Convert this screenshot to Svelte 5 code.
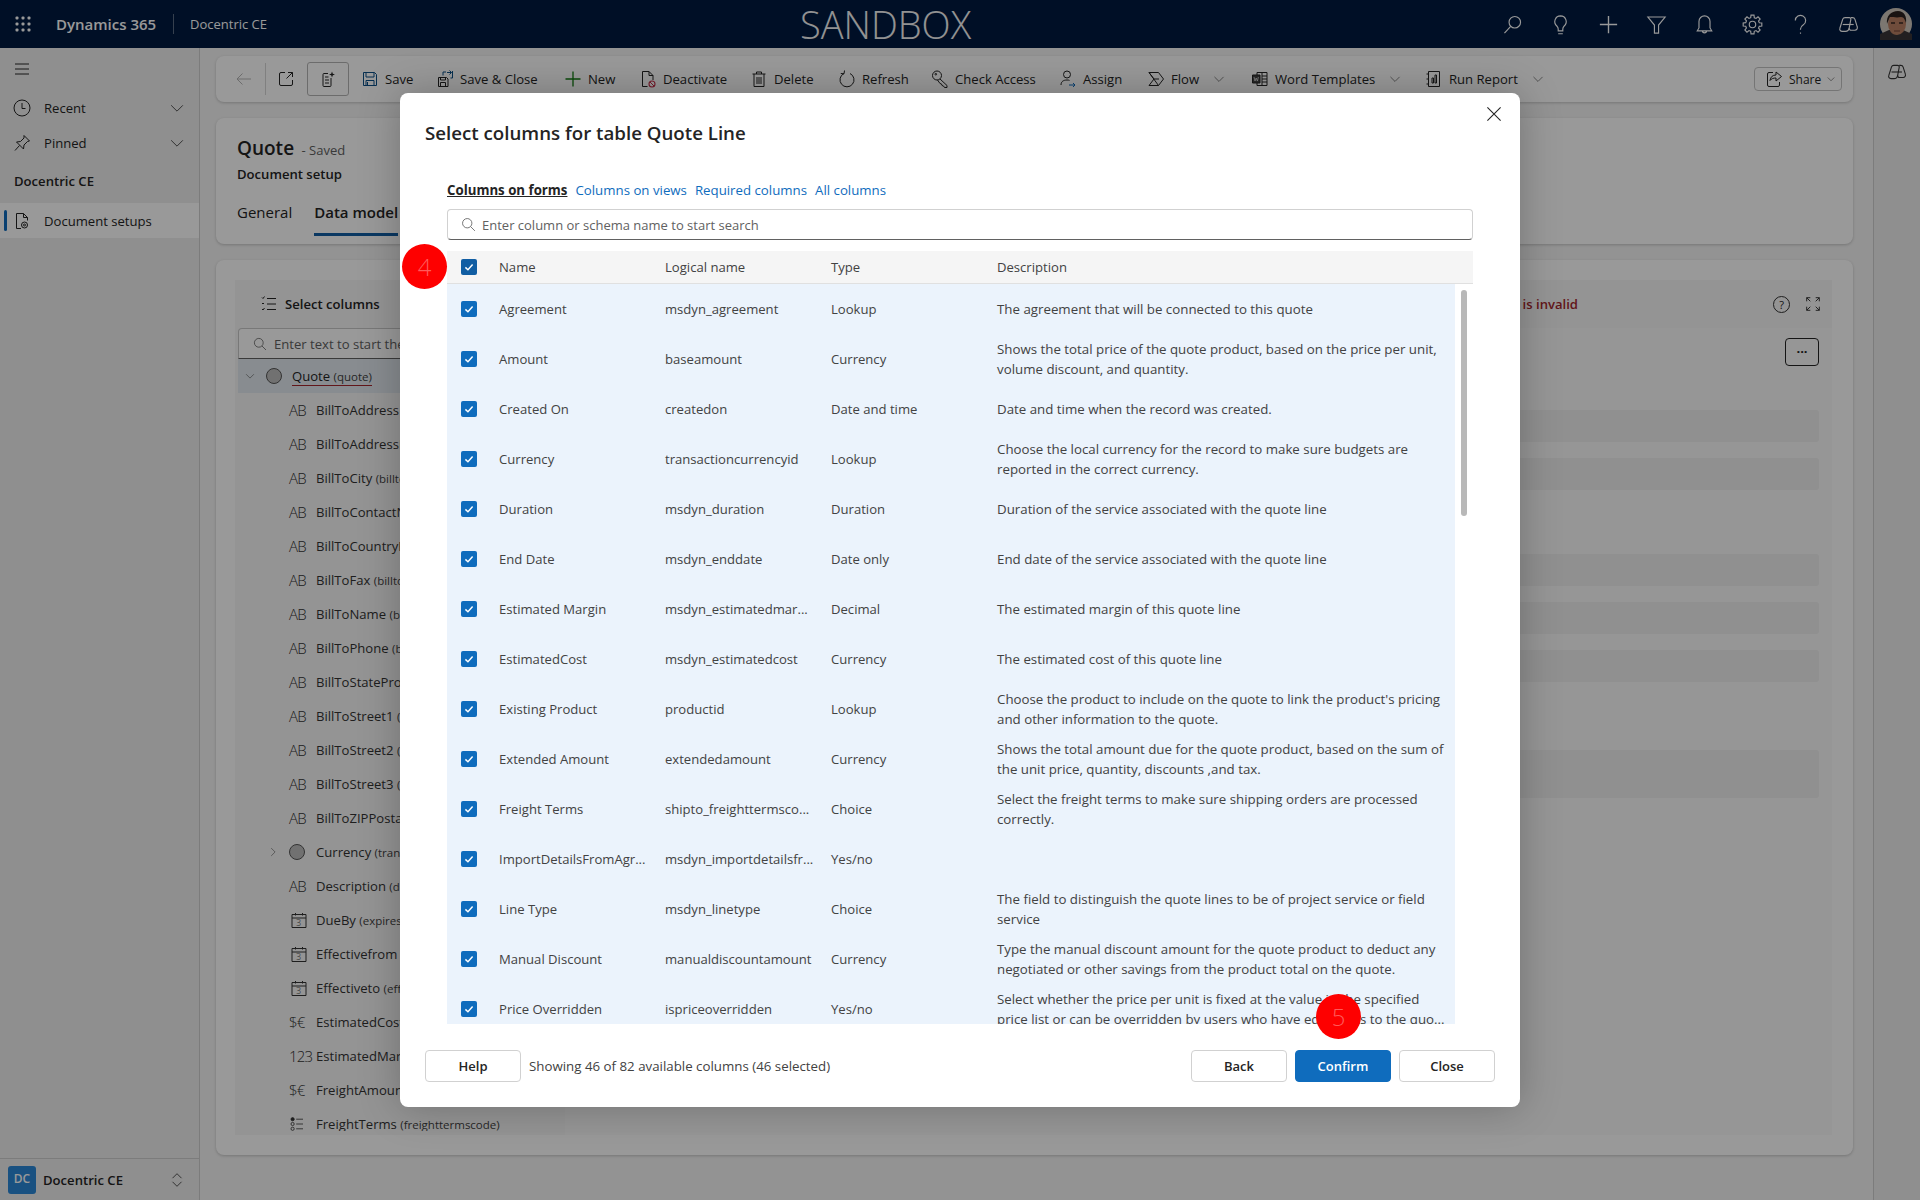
<script lang="ts">
  // gear outline for the settings icon
  function gearPath() {
    let d = '';
    for (let i = 0; i < 8; i++) {
      const a = (i * Math.PI) / 4;
      const pts = [[-0.16, 8.2], [0.16, 8.2], [0.26, 6.1], [0.53, 6.1]].map(([o, r]) => {
        return `${(10 + r * Math.cos(a + o)).toFixed(2)} ${(10 + r * Math.sin(a + o)).toFixed(2)}`;
      });
      d += `${i ? 'L' : 'M'}${pts.join('L')}`;
    }
    return d + 'Z';
  }

  const icons: Record<string, string> = {
    back: '<path d="M17 10H3M8.5 4.5 3 10l5.5 5.5"/>',
    popout: '<path d="M9 3.5H5a1.5 1.5 0 0 0-1.5 1.5v10A1.5 1.5 0 0 0 5 16.500h10a1.500 1.500 0 0 0 1.500-1.500v-4M12 3.500h4.500V8M16.500 3.500 10.500 9.500"/>',
    form: '<path d="M13 9v7.500a1 1 0 0 1-1 1H6a1 1 0 0 1-1-1v-11a1 1 0 0 1 1-1h4"/><path d="M7 8h3.500M7 11h4M7 14h4" /><path d="M14 2.500l.8 2.200 2.200.8-2.200.8-.8 2.200-.8-2.200-2.200-.8 2.200-.8z" fill="currentColor" stroke="none"/>',
    save: '<g stroke="#0b4f86"><path d="M3.500 3.500h11l2 2v11h-13z"/><path d="M6 3.500V8h8V3.500M6 16.500V11.500h8v5"/><path d="M7.500 13v3.500" /></g>',
    saveclose: '<path d="M3.500 8.500h8l1.500 1.500v7.500H3.500z"/><path d="M5.500 8.500V11h5V8.500M5.500 17.500v-4h5v4"/><g stroke="#0b4f86"><path d="M8 6.500V3h3M12 3.500h4.500M14.500 1.500l2 2-2 2"/><path d="M17.500 2v7h-2"/></g>',
    new: '<path d="M10 2.500v15M2.500 10h15" stroke="#107c10" stroke-width="1.300"/>',
    deactivate: '<path d="M9.500 17.500H4.500v-15h6.500l4 4v4.500M11 2.500v4h4"/><circle cx="14" cy="15" r="3" stroke="#c4314b" stroke-width="1.100"/><path d="m12 13 4 4" stroke="#c4314b"/>',
    delete: '<path d="M3.500 5h13M7.500 5V3h5v2M5 5v12.500h10V5M8 8v7M10 8v7M12 8v7"/>',
    refresh: '<path d="M7 4.500a7 7 0 1 0 6 0M7.500 1.500 7 4.800 3.800 4.500" />',
    key: '<circle cx="7" cy="6.500" r="4.500"/><path d="m10 10 7 6.500v2h-2.500l-1-1.500-1.500-.5-.5-1.500-1.500-.5L7.500 11"/><circle cx="5.800" cy="5.200" r=".8"/>',
    assign: '<circle cx="9" cy="5.500" r="3.500"/><path d="M3 16c0-3.500 2.500-5 6-5 1 0 1.800.1 2.500.4"/><path d="M11 16h6M15 14l2 2-2 2" stroke="#0f6cbd"/>',
    flow: '<path d="M3 3.500h9.500l5 6.500-5 6.500H3l5-6.500zM8 10h5M3 3.500l9.500 13"/>',
    word: '<path d="M7 3.500h10v13H7z"/><path d="M12 3.500v13M12 7h5M12 10h5M12 13h5"/><path d="M2.500 6h7.500v8H2.500z" fill="#444"/><path d="m4 8 1 4 1.200-3 1.200 3 1-4" stroke="#eee" stroke-width=".7"/>',
    report: '<path d="M4.500 2.500h11v15h-11zM2.500 5h2M2.500 10h2M2.500 15h2"/><path d="M8 14V9h1.500v5zM11 14V6h1.500v8z"/>',
    chevron: '<path d="M3.500 7 10 13.500 16.500 7"/>',
    share: '<path d="M9 3.500H5A1.500 1.500 0 0 0 3.500 5v11A1.500 1.500 0 0 0 5 17.500h9a1.500 1.500 0 0 0 1.500-1.500v-3"/><path d="M12 3v3c-3.500 0-5.500 2-6 5.500 1.500-2 3.500-2.500 6-2.500v3l5.500-4.500z"/>',
    search: '<circle cx="12" cy="8" r="5"/><path d="M8.400 11.600 3 17.500"/>',
    bulb: '<path d="M10 2.500a5 5 0 0 0-3.200 8.800c.7.700 1.200 1.500 1.200 2.700v1.500h4V14c0-1.200.5-2 1.200-2.700A5 5 0 0 0 10 2.500zM8 18h4"/>',
    plus: '<path d="M10 2.500v15M2.500 10h15" stroke-width="1.200"/>',
    filter: '<path d="M2.500 3.500h15L11.800 10.500v7H8.200v-7z"/>',
    bell: '<path d="M10 2.500a4.800 4.800 0 0 0-4.800 4.800V13l-1.500 2.500h12.600L14.800 13V7.300A4.800 4.800 0 0 0 10 2.500zM8.200 15.500a1.800 1.800 0 0 0 3.600 0"/>',
    gear: `<path d="${gearPath()}"/><circle cx="10" cy="10" r="2.800"/>`,
    help: '<path d="M5.500 6.500a4.500 4.500 0 1 1 7 3.800C11 11.300 10 12 10 14v.5M10 17v1"/>',
    copilot: '<path d="M7 4h3.500c1 0 1.700.8 1.500 1.800L10.600 13c-.3 1.700-1.500 3-3.200 3H4.500C3 16 2 14.700 2.500 13.300L5 5.300C5.300 4.500 6 4 7 4z"/><path d="M12 4h1.500c1 0 1.800.6 2.100 1.500l2 6.500c.5 1.500-.5 3-2 3h-3.400c-1 0-1.700-.9-1.500-1.900"/><path d="M5 10h9.500"/>',
    clock: '<circle cx="10" cy="10" r="8"/><path d="M10 5v5.500h3.500" />',
    pin: '<path d="M12 2.500 17.500 8l-2 .5-3.500 3.500-.5 4-7-7 4-.5L12 5zM7.500 12.500 3 17.500"/>',
    docgear: '<path d="M9 17.500H4.500v-15h7l4 4v3M11.500 2.500v4h4"/><circle cx="12.500" cy="14" r="3"/><circle cx="12.500" cy="14" r="1"/>',
    lines: '<path d="M8 4.500h9M8 10h9M8 15.500h9M3 3.500l1 1 1.500-2M3 15l1 1 1.500-2"/><path d="M3 9.500h2"/>',
    find: '<circle cx="8.500" cy="8.500" r="5.500"/><path d="m12.500 12.500 5 5"/>',
    close: '<path d="M4 4l12 12M16 4 4 16"/>',
    fullscreen: '<path d="M3 7V3h4M3 3l4 4M13 3h4v4M17 3l-4 4M3 13v4h4M3 17l4-4M17 13v4h-4M17 17l-4-4"/>',
    cal: '<path d="M3 4.500h14v13H3zM3 8h14M6.500 3v2.500M13.500 3v2.500"/>',
    list: '<circle cx="4.500" cy="4" r="2" fill="currentColor"/><circle cx="4.500" cy="10" r="2"/><circle cx="4.500" cy="16" r="2"/><path d="M9 4h8.500M9 10h8.500M9 16h8.500"/>',
    tick: '<path d="M5.500 10.500 8.700 13.500 14.500 7" stroke-width="1.800"/>',
    updown: '<path d="M5 8l5-5 5 5M5 12l5 5 5-5"/>'
  };

  const commands = [
    { icon: 'save', label: 'Save', width: 75 },
    { icon: 'saveclose', label: 'Save & Close', width: 128 },
    { icon: 'new', label: 'New', width: 75 },
    { icon: 'deactivate', label: 'Deactivate', width: 111 },
    { icon: 'delete', label: 'Delete', width: 88 },
    { icon: 'refresh', label: 'Refresh', width: 93 },
    { icon: 'key', label: 'Check Access', width: 128 },
    { icon: 'assign', label: 'Assign', width: 88 },
    { icon: 'flow', label: 'Flow', width: 104, menu: true },
    { icon: 'word', label: 'Word Templates', width: 174, menu: true },
    { icon: 'report', label: 'Run Report', width: 140, menu: true }
  ];

  const topIcons = ['search', 'bulb', 'plus', 'filter', 'bell', 'gear', 'help', 'copilot'];

  const treeRows = [
    { kind: 'AB', name: 'BillToAddress', logical: '(billtoaddress)' },
    { kind: 'AB', name: 'BillToAddressName', logical: '(billto_name)' },
    { kind: 'AB', name: 'BillToCity', logical: '(billto_city)' },
    { kind: 'AB', name: 'BillToContactName', logical: '(billto_contactname)' },
    { kind: 'AB', name: 'BillToCountryRegion', logical: '(billto_country)' },
    { kind: 'AB', name: 'BillToFax', logical: '(billto_fax)' },
    { kind: 'AB', name: 'BillToName', logical: '(billto_name)' },
    { kind: 'AB', name: 'BillToPhone', logical: '(billto_telephone)' },
    { kind: 'AB', name: 'BillToStateProvince', logical: '(billto_stateorprovince)' },
    { kind: 'AB', name: 'BillToStreet1', logical: '(billto_line1)' },
    { kind: 'AB', name: 'BillToStreet2', logical: '(billto_line2)' },
    { kind: 'AB', name: 'BillToStreet3', logical: '(billto_line3)' },
    { kind: 'AB', name: 'BillToZIPPostalCode', logical: '(billto_postalcode)' },
    { kind: 'circle', name: 'Currency', logical: '(transactioncurrencyid)' },
    { kind: 'AB', name: 'Description', logical: '(description)' },
    { kind: 'cal', name: 'DueBy', logical: '(expiresdate)' },
    { kind: 'cal', name: 'Effectivefrom', logical: '(effectivefrom)' },
    { kind: 'cal', name: 'Effectiveto', logical: '(effectiveto)' },
    { kind: '$€', name: 'EstimatedCost', logical: '(msdyn_estimatedcost)' },
    { kind: '123', name: 'EstimatedMargin', logical: '(msdyn_estimatedmargin)' },
    { kind: '$€', name: 'FreightAmount', logical: '(freightamount)' },
    { kind: 'list', name: 'FreightTerms', logical: '(freighttermscode)' }
  ];

  const columns = [
    { name: 'Agreement', logical: 'msdyn_agreement', type: 'Lookup', desc: ['The agreement that will be connected to this quote'] },
    { name: 'Amount', logical: 'baseamount', type: 'Currency', desc: ['Shows the total price of the quote product, based on the price per unit,', 'volume discount, and quantity.'] },
    { name: 'Created On', logical: 'createdon', type: 'Date and time', desc: ['Date and time when the record was created.'] },
    { name: 'Currency', logical: 'transactioncurrencyid', type: 'Lookup', desc: ['Choose the local currency for the record to make sure budgets are', 'reported in the correct currency.'] },
    { name: 'Duration', logical: 'msdyn_duration', type: 'Duration', desc: ['Duration of the service associated with the quote line'] },
    { name: 'End Date', logical: 'msdyn_enddate', type: 'Date only', desc: ['End date of the service associated with the quote line'] },
    { name: 'Estimated Margin', logical: 'msdyn_estimatedmar...', type: 'Decimal', desc: ['The estimated margin of this quote line'] },
    { name: 'EstimatedCost', logical: 'msdyn_estimatedcost', type: 'Currency', desc: ['The estimated cost of this quote line'] },
    { name: 'Existing Product', logical: 'productid', type: 'Lookup', desc: ["Choose the product to include on the quote to link the product's pricing", 'and other information to the quote.'] },
    { name: 'Extended Amount', logical: 'extendedamount', type: 'Currency', desc: ['Shows the total amount due for the quote product, based on the sum of', 'the unit price, quantity, discounts ,and tax.'] },
    { name: 'Freight Terms', logical: 'shipto_freighttermsco...', type: 'Choice', desc: ['Select the freight terms to make sure shipping orders are processed', 'correctly.'] },
    { name: 'ImportDetailsFromAgr...', logical: 'msdyn_importdetailsfr...', type: 'Yes/no', desc: [] },
    { name: 'Line Type', logical: 'msdyn_linetype', type: 'Choice', desc: ['The field to distinguish the quote lines to be of project service or field', 'service'] },
    { name: 'Manual Discount', logical: 'manualdiscountamount', type: 'Currency', desc: ['Type the manual discount amount for the quote product to deduct any', 'negotiated or other savings from the product total on the quote.'] },
    { name: 'Price Overridden', logical: 'ispriceoverridden', type: 'Yes/no', desc: ['Select whether the price per unit is fixed at the value in the specified', 'price list or can be overridden by users who have edit rights to the quo...'] }
  ];

  const filters = ['Columns on views', 'Required columns', 'All columns'];
</script>

{#snippet icon(name: string, size = 20)}
  <svg class="ic" width={size} height={size} viewBox="0 0 20 20">{@html icons[name]}</svg>
{/snippet}

{#snippet checkbox()}
  <span class="check">{@render icon('tick', 16)}</span>
{/snippet}

<div class="app">
  <header class="topbar">
    <svg class="waffle" width="18" height="18" viewBox="0 0 18 18">
      {#each [3, 9, 15] as y}
        {#each [3, 9, 15] as x}
          <rect x={x - 1.5} y={y - 1.5} width="3" height="3" rx="1" fill="#fff" />
        {/each}
      {/each}
    </svg>
    <span class="brand">Dynamics 365</span>
    <span class="app-name">Docentric CE</span>
    <span class="sandbox">SANDBOX</span>
    <div class="top-icons">
      {#each topIcons as name}
        <span class="top-btn">{@render icon(name, 23)}</span>
      {/each}
      <svg class="avatar" width="32" height="32" viewBox="0 0 32 32">
        <circle cx="16" cy="16" r="16" fill="#cfc7bd" />
        <path d="M0 32V26l9-4h14l9 4v6z" fill="#3a3538" />
        <ellipse cx="17" cy="16" rx="9" ry="11" fill="#b97f63" />
        <path d="M7 16C6 8 11 3 18 3c6 0 9 5 8 12-1-3-2-6-5-6-4 1-8 0-11 0-1 2-2 4-3 7z" fill="#2a211f" />
        <path d="M11 15h4M19 15h4" stroke="#3a2a25" stroke-width="1.500" />
        <path d="M14 23h6" stroke="#7c4a3c" stroke-width="1.200" />
      </svg>
    </div>
  </header>

  <div class="workspace">
    <nav class="sidebar">
      <div class="nav-row burger">
        <svg class="ic" width="20" height="20" viewBox="0 0 20 20"><path d="M3 5h14M3 10h14M3 15h14" /></svg>
      </div>
      <div class="nav-row">
        {@render icon('clock')}
        <span class="nav-label">Recent</span>
        <span class="nav-chev">{@render icon('chevron', 18)}</span>
      </div>
      <div class="nav-row">
        {@render icon('pin')}
        <span class="nav-label">Pinned</span>
        <span class="nav-chev">{@render icon('chevron', 18)}</span>
      </div>
      <div class="nav-section">Docentric CE</div>
      <div class="nav-row selected">
        {@render icon('docgear')}
        <span class="nav-label">Document setups</span>
      </div>
      <div class="area">
        <span class="area-tile">DC</span>
        <span class="area-name">Docentric CE</span>
        <span class="nav-chev">{@render icon('updown', 18)}</span>
      </div>
    </nav>

    <main class="page">
      <section class="card commandbar">
        <span class="cmd-back">{@render icon('back')}</span>
        <span class="cmd-sep"></span>
        <span class="cmd-pop">{@render icon('popout')}</span>
        <span class="cmd-form">{@render icon('form')}</span>
        {#each commands as cmd}
          <span class="cmd" style="width:{cmd.width}px">
            {@render icon(cmd.icon)}
            <span class="cmd-label">{cmd.label}</span>
            {#if cmd.menu}<span class="cmd-chev">{@render icon('chevron', 14)}</span>{/if}
          </span>
        {/each}
        <span class="share">
          {@render icon('share')}
          <span class="share-label">Share</span>
          {@render icon('chevron', 10)}
        </span>
      </section>

      <section class="card form-head">
        <div class="form-title"><strong>Quote</strong> <span class="saved">- Saved</span></div>
        <div class="form-sub">Document setup</div>
        <div class="form-tabs">
          <span>General</span>
          <span class="tab-on">Data model</span>
        </div>
      </section>

      <section class="card designer">
        <div class="designer-inner">
          <div class="designer-head">
            <span class="select-cols">{@render icon('lines')} Select columns</span>
            <span class="invalid">The data model is invalid</span>
            <span class="head-tools">
              <span class="help-ring">?</span>
              {@render icon('fullscreen', 18)}
            </span>
          </div>
          <div class="designer-body">
            <div class="tree">
              <div class="tree-search">{@render icon('find', 16)} Enter text to start the search</div>
              <div class="tree-root">
                <span class="tree-chev">{@render icon('chevron', 12)}</span>
                <span class="tree-circle"></span>
                <span class="tree-quote">Quote <small>(quote)</small></span>
              </div>
              {#each treeRows as row}
                <div class="tree-row">
                  <span class="tree-kind">
                    {#if row.kind === 'circle'}
                      <span class="tree-chev side">{@render icon('chevron', 12)}</span>
                      <span class="tree-circle"></span>
                    {:else if row.kind === 'cal'}
                      <span class="cal">{@render icon('cal')}<i>3</i></span>
                    {:else if row.kind === 'list'}
                      {@render icon('list', 16)}
                    {:else}
                      {row.kind}
                    {/if}
                  </span>
                  <span>{row.name} <small>{row.logical}</small></span>
                </div>
              {/each}
            </div>
            <div class="preview">
              <div class="more"><span>···</span></div>
              <div class="bar first"></div>
              <div class="bar"></div>
              <div class="bar gap"></div>
              <div class="bar"></div>
              <div class="bar"></div>
              <div class="bar tall"></div>
            </div>
          </div>
        </div>
      </section>
    </main>

    <aside class="rail">{@render icon('copilot', 22)}</aside>
  </div>

  <div class="overlay">
    <div class="modal">
      <h2>Select columns for table Quote Line</h2>
      <button class="modal-close" aria-label="Close">{@render icon('close', 22)}</button>

      <div class="filters">
        <span class="filter-on">Columns on forms</span>
        {#each filters as f}<span class="filter">{f}</span>{/each}
      </div>

      <div class="search">{@render icon('find', 17)}<span>Enter column or schema name to start search</span></div>

      <div class="grid-head row-grid">
        <span class="head-check">{@render checkbox()}</span>
        <span>Name</span>
        <span>Logical name</span>
        <span>Type</span>
        <span>Description</span>
      </div>

      <div class="scroller">
        <div class="rows">
          {#each columns as col}
            <div class="row row-grid">
              {@render checkbox()}
              <span>{col.name}</span>
              <span>{col.logical}</span>
              <span>{col.type}</span>
              <span class="desc">
                {#each col.desc as line}<span>{line}</span>{/each}
              </span>
            </div>
          {/each}
        </div>
        <div class="track"><div class="thumb"></div></div>
      </div>

      <footer class="modal-foot">
        <button class="btn">Help</button>
        <span class="status">Showing 46 of 82 available columns (46 selected)</span>
        <div class="foot-actions">
          <button class="btn">Back</button>
          <button class="btn primary">Confirm</button>
          <button class="btn">Close</button>
        </div>
      </footer>

      <span class="step step-4">4</span>
      <span class="step step-5">5</span>
    </div>
  </div>
</div>

<style>
  :global(body) {
    margin: 0;
    background: #f5f5f5;
  }

  .app {
    position: relative;
    width: 1920px;
    height: 1200px;
    overflow: hidden;
    font-family: "Open Sans", "Noto Sans", sans-serif;
    font-size: 13.100px;
    color: #242424;
    display: flex;
    flex-direction: column;
  }

  .ic {
    fill: none;
    stroke: currentColor;
    stroke-width: 1;
    flex: none;
    display: block;
  }

  /* top bar */
  .topbar {
    height: 48px;
    flex: none;
    background: #001a40;
    color: #fff;
    display: flex;
    align-items: center;
    position: relative;
  }

  .waffle {
    margin-left: 14px;
  }

  .brand {
    margin-left: 24px;
    font-size: 15px;
    font-weight: 600;
    width: 117px;
  }

  .app-name {
    border-left: 1px solid #5b6b82;
    padding-left: 16px;
    line-height: 20px;
    font-size: 13px;
  }

  .sandbox {
    position: absolute;
    left: 800px;
    top: 0;
    line-height: 48px;
    font-size: 38px;
    font-weight: 300;
    color: #f4f4f4;
  }

  .top-icons {
    margin-left: auto;
    display: flex;
    align-items: center;
    padding-right: 8px;
  }

  .top-btn {
    width: 48px;
    display: flex;
    justify-content: center;
  }

  .avatar {
    display: block;
    margin-left: 8px;
  }

  .workspace {
    flex: 1;
    display: flex;
    min-height: 0;
  }

  /* sidebar */
  .sidebar {
    width: 199px;
    flex: none;
    border-right: 1px solid #cfcfcf;
    background: #efefef;
    display: flex;
    flex-direction: column;
  }

  .nav-row {
    height: 35px;
    display: flex;
    align-items: center;
    padding-left: 12px;
    position: relative;
  }

  .burger {
    height: 42px;
  }

  .nav-label {
    margin-left: 12px;
  }

  .nav-chev {
    position: absolute;
    right: 13px;
    color: #424242;
  }

  .nav-section {
    height: 43px;
    line-height: 43px;
    padding-left: 14px;
    font-weight: 600;
  }

  .selected {
    background: #fff;
  }

  .selected::before {
    content: '';
    position: absolute;
    left: 4px;
    top: 7px;
    bottom: 7px;
    width: 3px;
    border-radius: 2px;
    background: #0f6cbd;
  }

  .area {
    margin-top: auto;
    height: 41px;
    border-top: 1px solid #cfcfcf;
    display: flex;
    align-items: center;
    padding-left: 8px;
    position: relative;
  }

  .area-tile {
    width: 28px;
    height: 28px;
    background: #2b88d8;
    border-radius: 3px;
    color: #fff;
    font-size: 12px;
    font-weight: 600;
    text-align: center;
    line-height: 26px;
  }

  .area-name {
    margin-left: 7px;
    font-weight: 600;
  }

  /* page behind the dialog */
  .page {
    flex: 1;
    min-width: 0;
    background: #f5f5f5;
    padding: 8px 20px 0 16px;
    display: flex;
    flex-direction: column;
    gap: 16px;
  }

  .card {
    background: #fff;
    border-radius: 8px;
    box-shadow: 0 1px 3px rgba(0, 0, 0, 0.2);
    flex: none;
  }

  .commandbar {
    height: 46px;
    display: flex;
    align-items: center;
    color: #242424;
  }

  .cmd-back {
    margin-left: 18px;
    color: #b5b5b5;
  }

  .cmd-sep {
    width: 1px;
    height: 32px;
    background: #d5d5d5;
    margin: 0 10px 0 11px;
  }

  .cmd-form {
    width: 40px;
    height: 32px;
    border: 1px solid #b5b5b5;
    border-radius: 3px;
    display: flex;
    align-items: center;
    justify-content: center;
    margin: 0 11px 0 11px;
  }

  .cmd {
    display: flex;
    align-items: center;
    flex: none;
  }

  .cmd-label {
    margin-left: 5px;
    white-space: nowrap;
  }

  .cmd-chev {
    margin-left: 13px;
    color: #555;
  }

  .share {
    margin-left: auto;
    margin-right: 11px;
    width: 88px;
    height: 24px;
    box-sizing: border-box;
    border: 1px solid #c4c4c4;
    border-radius: 4px;
    display: flex;
    align-items: center;
    gap: 5px;
    padding-left: 9px;
    font-size: 12px;
  }

  .form-head {
    height: 126px;
    padding-left: 21px;
    box-sizing: border-box;
    padding-top: 16px;
  }

  .form-title {
    line-height: 28px;
    font-size: 13px;
    color: #616161;
  }

  .form-title strong {
    font-size: 19px;
    font-weight: 600;
    color: #242424;
  }

  .saved {
    margin-left: 4px;
  }

  .form-sub {
    font-weight: 600;
    line-height: 20px;
  }

  .form-tabs {
    display: flex;
    gap: 22px;
    margin-top: 18px;
    font-size: 15px;
  }

  .tab-on {
    font-weight: 600;
    padding-bottom: 11px;
    border-bottom: 3px solid #115ea3;
  }

  .designer {
    height: 895px;
    padding: 20px 21px 20px 19px;
    box-sizing: border-box;
  }

  .designer-inner {
    height: 100%;
    background: #f7f7f7;
    display: flex;
    flex-direction: column;
  }

  .designer-head {
    height: 48px;
    flex: none;
    display: flex;
    align-items: center;
    position: relative;
  }

  .select-cols {
    margin-left: 24px;
    font-weight: 600;
    display: flex;
    align-items: center;
    gap: 6px;
  }

  .invalid {
    position: absolute;
    right: 254px;
    color: #a4262c;
    font-weight: 600;
  }

  .head-tools {
    margin-left: auto;
    margin-right: 10px;
    display: flex;
    align-items: center;
    gap: 14px;
  }

  .help-ring {
    width: 15px;
    height: 15px;
    border: 1px solid #333;
    border-radius: 50%;
    text-align: center;
    line-height: 15px;
    font-size: 11px;
  }

  .designer-body {
    flex: 1;
    display: flex;
    min-height: 0;
    background: #f7f7f7;
  }

  .tree {
    width: 330px;
    flex: none;
    height: 803px;
    overflow: hidden;
    padding-left: 3px;
    box-sizing: border-box;
  }

  .tree-search {
    height: 31px;
    box-sizing: border-box;
    border: 1px solid #c8c8c8;
    border-bottom-color: #616161;
    border-radius: 4px 4px 0 0;
    background: #fff;
    display: flex;
    align-items: center;
    gap: 6px;
    padding-left: 13px;
    color: #616161;
    white-space: nowrap;
  }

  .tree-root {
    height: 34px;
    background: #e3eaf0;
    display: flex;
    align-items: center;
    position: relative;
  }

  .tree-chev {
    position: absolute;
    left: 6px;
    color: #555;
  }

  .tree-chev.side {
    left: 29px;
    transform: rotate(-90deg);
  }

  .tree-circle {
    width: 14px;
    height: 14px;
    border: 1px solid #555;
    border-radius: 50%;
    background: #bdbdbd;
    display: block;
    flex: none;
  }

  .tree-root .tree-circle {
    margin-left: 28px;
  }

  .tree-quote {
    margin-left: 10px;
    border-bottom: 1px solid #a4262c;
    line-height: 17px;
    margin-top: 2px;
  }

  small {
    font-size: 11.500px;
    color: #424242;
  }

  .tree-row {
    height: 34px;
    display: flex;
    align-items: center;
    position: relative;
    padding-left: 51px;
    white-space: nowrap;
    color: #333;
  }

  .tree-kind {
    width: 27px;
    font-size: 15px;
    font-weight: 300;
    letter-spacing: -0.8px;
    flex: none;
    display: flex;
    align-items: center;
  }

  .cal {
    position: relative;
    display: block;
  }

  .cal i {
    position: absolute;
    left: 7px;
    top: 7px;
    font-size: 9px;
    font-style: normal;
    line-height: 11px;
  }

  .preview {
    flex: 1;
    padding: 10px 13px 0 0;
    min-width: 0;
    background: #fbfbfb;
  }

  .more {
    margin-left: auto;
    width: 34px;
    height: 28px;
    box-sizing: border-box;
    border: 1px solid #242424;
    border-radius: 4px;
    text-align: center;
    line-height: 24px;
    font-weight: 700;
    font-size: 13px;
  }

  .bar {
    height: 32px;
    margin-top: 16px;
    background: #f0f0f0;
    border-radius: 3px;
  }

  .first {
    margin-top: 44px;
  }

  .gap {
    margin-top: 64px;
  }

  .tall {
    height: 48px;
    margin-top: 68px;
  }

  .rail {
    width: 46px;
    flex: none;
    border-left: 1px solid #cfcfcf;
    background: #efefef;
    display: flex;
    justify-content: center;
    padding-top: 13px;
    box-sizing: content-box;
    color: #333;
  }

  /* dialog */
  .overlay {
    position: absolute;
    inset: 0;
    background: rgba(0, 0, 0, 0.4);
    display: flex;
    align-items: center;
    justify-content: center;
  }

  .modal {
    position: relative;
    width: 1120px;
    height: 1014px;
    background: #fff;
    border-radius: 8px;
    box-shadow: 0 0 40px rgba(0, 0, 0, 0.25);
    padding: 0 25px;
    box-sizing: border-box;
    display: flex;
    flex-direction: column;
  }

  h2 {
    margin: 27px 0 0;
    font-size: 18.700px;
    line-height: 26px;
    font-weight: 600;
    color: #242424;
  }

  .modal-close {
    position: absolute;
    right: 15px;
    top: 10px;
    border: 0;
    padding: 0;
    background: none;
    color: #242424;
  }

  .filters {
    margin: 34px 0 0 22px;
    display: flex;
    gap: 8px;
    line-height: 20px;
    height: 20px;
    font-size: 13.250px;
  }

  .filter {
    color: #0f6cbd;
  }

  .filter-on {
    font-weight: 700;
    text-decoration: underline;
  }

  .search {
    margin: 9px 22px 0 22px;
    height: 31px;
    box-sizing: border-box;
    border: 1px solid #d1d1d1;
    border-bottom-color: #616161;
    border-radius: 4px;
    display: flex;
    align-items: center;
    padding-left: 12px;
    gap: 5px;
    color: #616161;
    font-size: 13px;
  }

  .row-grid {
    display: grid;
    grid-template-columns: 52px 166px 166px 166px 1fr;
    align-items: center;
    white-space: nowrap;
  }

  .grid-head {
    margin: 11px 22px 0 22px;
    height: 33px;
    box-sizing: border-box;
    background: #f5f5f5;
    border-bottom: 1px solid #e0e0e0;
    color: #424242;
  }

  .head-check .check {
    background: #115ea3;
  }

  .check {
    width: 16px;
    height: 16px;
    margin-left: 14px;
    border-radius: 2px;
    background: #0f6cbd;
    color: #fff;
    display: block;
  }

  .scroller {
    margin: 0 22px;
    height: 740px;
    overflow: hidden;
    display: flex;
  }

  .rows {
    flex: 1;
    min-width: 0;
  }

  .row {
    height: 50px;
    background: #ebf3fc;
    color: #424242;
  }

  .desc {
    display: flex;
    flex-direction: column;
    line-height: 20px;
    font-size: 13.300px;
  }

  .track {
    width: 18px;
    flex: none;
  }

  .thumb {
    width: 6px;
    height: 226px;
    margin: 6px 0 0 6px;
    background: #b8b8b8;
    border-radius: 3px;
  }

  .modal-foot {
    margin-top: 26px;
    display: flex;
    align-items: center;
  }

  .status {
    margin-left: 8px;
    color: #424242;
    font-size: 13.300px;
  }

  .foot-actions {
    margin-left: auto;
    display: flex;
    gap: 8px;
  }

  .btn {
    width: 96px;
    height: 32px;
    box-sizing: border-box;
    border: 1px solid #d1d1d1;
    border-radius: 4px;
    background: #fff;
    font: 600 13px "Open Sans", "Noto Sans", sans-serif;
    color: #242424;
    padding: 0;
  }

  .primary {
    background: #0f6cbd;
    border-color: #0f6cbd;
    color: #fff;
  }

  .step {
    position: absolute;
    width: 45px;
    height: 45px;
    border-radius: 50%;
    background: #fe0000;
    color: #ff5a5a;
    font-size: 24px;
    font-weight: 300;
    line-height: 45px;
    text-align: center;
  }

  .step-4 {
    left: 2px;
    top: 151px;
  }

  .step-5 {
    left: 916px;
    top: 901px;
  }
</style>
